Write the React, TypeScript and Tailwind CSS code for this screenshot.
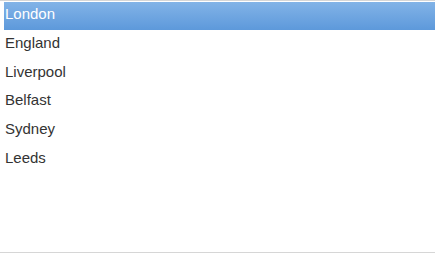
const cities = ['London', 'England', 'Liverpool', 'Belfast', 'Sydney', 'Leeds'];

export default function App() {
  return (
    <div className="h-[253px] w-[435px] border-y border-[#d6d6d6] bg-white pl-1 pt-px font-['Liberation_Sans',Arial,sans-serif] text-[15px] leading-[17px]">
      <ul>
        {cities.map((city, i) => (
          <li
            key={city}
            className={
              i === 0
                ? 'h-[28px] bg-gradient-to-b from-[#82b3e7] to-[#5d99db] pl-px pt-[3px] text-white'
                : 'h-[28.8px] pl-px pt-[3.8px] text-[#333333]'
            }
          >
            {city}
          </li>
        ))}
      </ul>
    </div>
  );
}
